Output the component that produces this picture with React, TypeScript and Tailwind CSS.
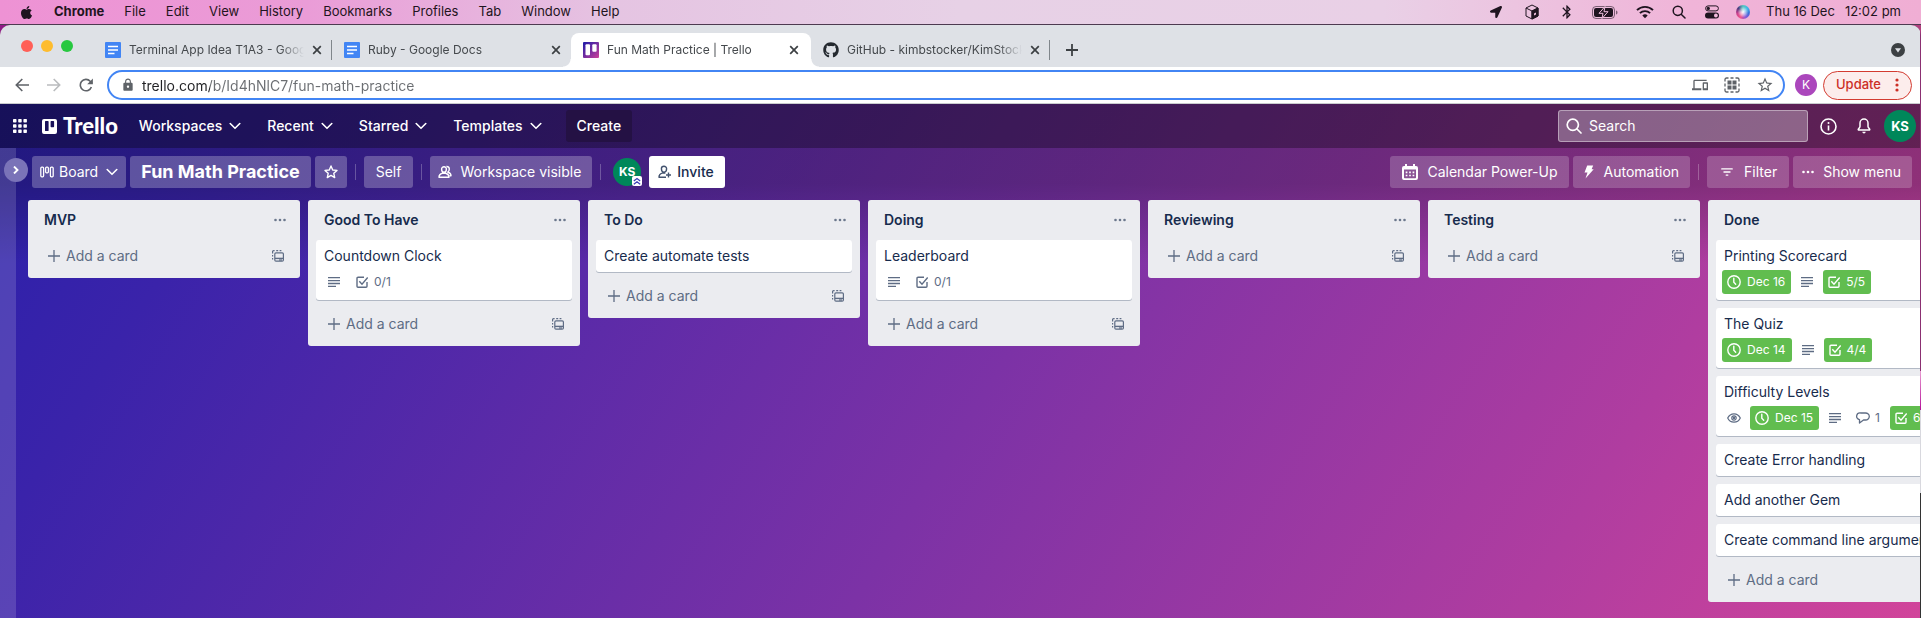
import type { ReactNode } from "react";
import { FaApple, FaGithub, FaLocationArrow } from "react-icons/fa";
import { MdBluetooth, MdLock, MdOutlineDevices, MdStarBorder } from "react-icons/md";

type Card = {
  title: string;
  watch?: boolean;
  due?: string;
  description?: boolean;
  comments?: number;
  checklist?: string;
  complete?: boolean;
};

type List = { name: string; cards: Card[] };

const lists: List[] = [
  { name: "MVP", cards: [] },
  { name: "Good To Have", cards: [{ title: "Countdown Clock", description: true, checklist: "0/1" }] },
  { name: "To Do", cards: [{ title: "Create automate tests" }] },
  { name: "Doing", cards: [{ title: "Leaderboard", description: true, checklist: "0/1" }] },
  { name: "Reviewing", cards: [] },
  { name: "Testing", cards: [] },
  {
    name: "Done",
    cards: [
      { title: "Printing Scorecard", due: "Dec 16", description: true, checklist: "5/5", complete: true },
      { title: "The Quiz", due: "Dec 14", description: true, checklist: "4/4", complete: true },
      {
        title: "Difficulty Levels",
        watch: true,
        due: "Dec 15",
        description: true,
        comments: 1,
        checklist: "6/6",
        complete: true,
      },
      { title: "Create Error handling" },
      { title: "Add another Gem" },
      { title: "Create command line arguments" },
    ],
  },
];

const menus = ["File", "Edit", "View", "History", "Bookmarks", "Profiles", "Tab", "Window", "Help"];

/* ---------- macOS menu bar ---------- */

function MenuBar() {
  return (
    <div className="flex h-[25px] items-center justify-between border-b border-[#4d3a50] bg-[linear-gradient(90deg,#ee92d4_0%,#ea9cd7_16%,#e5c4e2_32%,#e7d1e6_50%,#e9d0e6_72%,#f0b4d8_88%,#f0aed4_100%)] pr-5 pl-[19px] text-[13px] text-[#1f1420]">
      <nav aria-label="Menu bar" className="flex items-center gap-5">
        <FaApple className="size-[15px]" />
        <button className="font-bold">Chrome</button>
        {menus.map((m) => (
          <button key={m}>{m}</button>
        ))}
      </nav>
      <div className="flex items-center">
        <FaLocationArrow className="mr-[22px] size-3" />
        <svg viewBox="0 0 16 16" className="mr-[19px] size-4" fill="none" stroke="currentColor" strokeLinejoin="round">
          <path d="M8 1l6 3v8l-6 3-6-3V4z M2 4l6 3 6-3 M8 7v8" />
          <path d="M8 7l6-3v8l-6 3z" fill="currentColor" />
          <path d="M10 9.500l2-1v2l-2 1z" fill="#f0c0de" stroke="none" />
        </svg>
        <MdBluetooth className="mr-[17px] size-4" />
        <svg viewBox="0 0 26 13" className="mr-[18px] h-[13px] w-[26px]">
          <rect x="0.500" y="0.500" width="22" height="12" rx="3.500" fill="none" stroke="currentColor" opacity="0.55" />
          <rect x="2" y="2" width="19" height="9" rx="2" fill="currentColor" />
          <path d="M24 4.500v4c1-.4 1.500-1 1.500-2s-.5-1.600-1.500-2z" fill="currentColor" opacity="0.55" />
          <path d="M13 0.500L7 7.300h4L10 12.500l6-6.800h-4z" fill="currentColor" stroke="#f0c0de" />
        </svg>
        <svg viewBox="0 0 18 14" className="mr-[18px] h-[14px] w-[18px]" fill="none" stroke="currentColor" strokeWidth="1.900">
          <path d="M1 5.200a11.300 11.300 0 0 1 16 0 M3.900 8.200a7.200 7.200 0 0 1 10.200 0" />
          <path d="M6.300 10.500a3.800 3.800 0 0 1 5.400 0L9 13.200z" fill="currentColor" stroke="none" />
        </svg>
        <svg viewBox="0 0 14 14" className="mr-[19px] size-[14px]" fill="none" stroke="currentColor" strokeWidth="1.500">
          <circle cx="5.800" cy="5.800" r="4.600" />
          <path d="M9.200 9.200l3.800 3.800" strokeLinecap="round" />
        </svg>
        <svg viewBox="0 0 14 14" className="mr-[17px] size-[14px]">
          <rect x="0.600" y="0.900" width="12.800" height="5" rx="2.500" fill="none" stroke="currentColor" />
          <circle cx="3.300" cy="3.400" r="1.600" fill="currentColor" />
          <rect x="0" y="7.500" width="14" height="6" rx="3" fill="currentColor" />
          <circle cx="10.900" cy="10.500" r="1.900" fill="#f0b8da" />
        </svg>
        <span className="mr-4 size-[14px] rounded-full bg-[radial-gradient(circle,#ffffff_0%,#ffffff80_30%,transparent_55%),conic-gradient(#58c7c0,#3fb8e6,#3b6fd8,#8a5ad8,#f0568c,#c8408e,#4a3a80,#58c7c0)]" />
        <time className="flex gap-[10px]">
          <span>Thu 16 Dec</span>
          <span>12:02 pm</span>
        </time>
      </div>
    </div>
  );
}

/* ---------- Browser chrome ---------- */

function DocsIcon() {
  return (
    <svg viewBox="0 0 16 16" className="size-4 shrink-0">
      <rect width="16" height="16" rx="1" fill="#4285f4" />
      <path d="M3 4.500h10M3 8h10M3 11.500h6.500" stroke="#fff" strokeWidth="1.700" />
    </svg>
  );
}

function TrelloFavicon() {
  return (
    <svg viewBox="0 0 16 16" className="size-4 shrink-0">
      <defs>
        <linearGradient id="fav" x1="0" y1="0" x2="1" y2="1">
          <stop offset="0" stopColor="#1c1aa8" />
          <stop offset="1" stopColor="#cd4299" />
        </linearGradient>
      </defs>
      <rect width="16" height="16" rx="1" fill="url(#fav)" />
      <rect x="2.500" y="2.300" width="4.500" height="11" rx="1" fill="#fff" />
      <rect x="9.300" y="2.300" width="4.300" height="7.500" rx="1" fill="#fff" />
    </svg>
  );
}

function Tab({ icon, title, active, divider }: { icon: ReactNode; title: string; active?: boolean; divider?: boolean }) {
  return (
    <div
      className={
        active
          ? "relative flex w-60 items-center rounded-t-lg bg-white pr-4 pl-3"
          : "flex w-[239px] items-center pl-3"
      }
    >
      {icon}
      <span className="ml-2 flex-1 overflow-hidden text-xs whitespace-nowrap text-[#45494d] [mask-image:linear-gradient(90deg,#000_calc(100%-24px),transparent)]">
        {title}
      </span>
      <button aria-label={"Close " + title} className={active ? "text-[#3c4043]" : "ml-2 text-[#3c4043]"}>
        <svg viewBox="0 0 10 10" className={active ? "-mr-1 size-[10px]" : "size-[10px]"} stroke="currentColor" strokeWidth="1.700">
          <path d="M1.200 1.200l7.600 7.600M8.800 1.200l-7.600 7.600" />
        </svg>
      </button>
      {!active && <span className={divider ? "ml-[9px] h-5 w-px bg-[#80868b]" : "ml-[9px] h-5 w-px"} />}
      {active && (
        <>
          <span className="absolute bottom-0 -left-2 size-2 bg-[radial-gradient(circle_at_0_0,transparent_7px,#ffffff_8px)]" />
          <span className="absolute -right-2 bottom-0 size-2 bg-[radial-gradient(circle_at_100%_0,transparent_7px,#ffffff_8px)]" />
        </>
      )}
    </div>
  );
}

function TabStrip() {
  return (
    <div className="flex h-[42px] items-stretch bg-[#dee1e6] pr-[15px] pl-[21px]">
      <div className="mr-5 flex items-center gap-2">
        <button aria-label="Close window" className="size-3 rounded-full bg-[#ff5f57]" />
        <button aria-label="Minimise window" className="size-3 rounded-full bg-[#febc2e]" />
        <button aria-label="Zoom window" className="size-3 rounded-full bg-[#28c840]" />
      </div>
      <div className="flex pt-2">
        <Tab icon={<DocsIcon />} title="Terminal App Idea T1A3 - Google Docs" divider />
        <Tab icon={<DocsIcon />} title="Ruby - Google Docs" />
        <Tab icon={<TrelloFavicon />} title="Fun Math Practice | Trello" active />
        <Tab
          icon={<FaGithub className="size-4 shrink-0 text-[#24292f]" />}
          title="GitHub - kimbstocker/KimStocker_T1A3"
          divider
        />
        <button aria-label="New tab" className="ml-4 text-[#3c4043]">
          <svg viewBox="0 0 12 12" className="size-3" stroke="currentColor" strokeWidth="1.800">
            <path d="M6 0v12M0 6h12" />
          </svg>
        </button>
      </div>
      <button aria-label="Search tabs" className="ml-auto pt-2">
        <svg viewBox="0 0 14 14" className="size-[14px]">
          <circle cx="7" cy="7" r="7" fill="#3c4043" />
          <path d="M4 5.200h6L7 9.600z" fill="#dee1e6" />
        </svg>
      </button>
    </div>
  );
}

function Toolbar() {
  return (
    <div className="flex h-[37px] items-center border-b border-[#c9cbce] bg-white pr-2 pl-[15px] text-[#5f6368]">
      <button aria-label="Back" className="mr-[18px]">
        <svg viewBox="0 0 14 14" className="size-[14px]" fill="none" stroke="currentColor" strokeWidth="1.600">
          <path d="M14 7H1.500M7.300 1L1.300 7l6 6" />
        </svg>
      </button>
      <button aria-label="Forward" className="mr-[18px] text-[#babcbe]">
        <svg viewBox="0 0 14 14" className="size-[14px]" fill="none" stroke="currentColor" strokeWidth="1.600">
          <path d="M0 7h12.500M6.700 1l6 6-6 6" />
        </svg>
      </button>
      <button aria-label="Reload" className="mr-[14px]">
        <svg viewBox="0 0 14 14" className="size-[14px]" fill="none" stroke="currentColor" strokeWidth="1.600">
          <path d="M12.400 9A5.700 5.700 0 1 1 11.200 3.200L13 5" />
          <path d="M13.900 0.500v5.700H8.200z" fill="currentColor" stroke="none" />
        </svg>
      </button>
      <div className="flex h-[30px] flex-1 items-center rounded-full border-2 border-[#4285f4] pr-[9px] pl-3">
        <MdLock className="size-[14px]" />
        <input
          aria-label="Address"
          defaultValue="trello.com/b/Id4hNlC7/fun-math-practice"
          className="ml-[7px] h-6 flex-1 bg-[linear-gradient(90deg,#202124_68px,#6b6e72_68px)] bg-clip-text text-sm text-transparent outline-none"
        />
        <MdOutlineDevices className="mr-4 size-4" />
        <svg viewBox="0 0 16 16" className="mr-4 size-4" fill="currentColor">
          <rect x="3.500" y="3.500" width="4" height="4" />
          <rect x="8.500" y="3.500" width="4" height="4" />
          <rect x="3.500" y="8.500" width="4" height="4" />
          <rect x="8.500" y="8.500" width="4" height="4" />
          <path
            d="M1 4.500V2.500a1.500 1.500 0 0 1 1.500-1.500h2M6.500 1h3M11.500 1h2a1.500 1.500 0 0 1 1.500 1.500v2M15 6.500v3M15 11.500v2a1.500 1.500 0 0 1-1.500 1.500h-2M9.500 15h-3M4.500 15h-2a1.500 1.500 0 0 1-1.500-1.500v-2M1 9.500v-3"
            fill="none"
            stroke="currentColor"
            strokeWidth="1.300"
          />
        </svg>
        <MdStarBorder className="size-[18px]" />
      </div>
      <button aria-label="Profile" className="ml-[10px] size-[22px] rounded-full bg-[#ab47bc] text-xs text-white">
        K
      </button>
      <button className="ml-[6px] flex h-[29px] items-center gap-[14px] rounded-full border border-[#d33b30] bg-[#fcedec] px-3 text-[13px] font-medium text-[#cc2f26]">
        Update
        <svg viewBox="0 0 4 14" className="h-[14px] w-1" fill="currentColor">
          <circle cx="2" cy="2" r="1.600" />
          <circle cx="2" cy="7" r="1.600" />
          <circle cx="2" cy="12" r="1.600" />
        </svg>
      </button>
    </div>
  );
}

/* ---------- Board icons ---------- */

function Chevron() {
  return (
    <svg viewBox="0 0 12 8" className="h-2 w-3" fill="none" stroke="currentColor" strokeWidth="1.600" strokeLinecap="round" strokeLinejoin="round">
      <path d="M1.200 1.500L6 6.300l4.800-4.800" />
    </svg>
  );
}

function Dots({ className }: { className: string }) {
  return (
    <svg viewBox="0 0 12 4" className={className} fill="currentColor">
      <circle cx="1.500" cy="2" r="1.300" />
      <circle cx="6" cy="2" r="1.300" />
      <circle cx="10.500" cy="2" r="1.300" />
    </svg>
  );
}

function DescriptionIcon() {
  return (
    <svg viewBox="0 0 12 10" className="h-[10px] w-3" stroke="currentColor" strokeWidth="1.300">
      <path d="M0 0.700h12M0 3.600h12M0 6.500h12M0 9.400h8" />
    </svg>
  );
}

function CheckIcon() {
  return (
    <svg viewBox="0 0 12 12" className="size-3" fill="none" stroke="currentColor" strokeWidth="1.400">
      <path d="M8 1.200H2a1 1 0 0 0-1 1v8a1 1 0 0 0 1 1h8a1 1 0 0 0 1-1V6" />
      <path d="M3.300 5.200l2.700 3 5.700-6.700" />
    </svg>
  );
}

function ClockIcon() {
  return (
    <svg viewBox="0 0 14 14" className="size-[14px]" fill="none" stroke="currentColor" strokeWidth="1.400" strokeLinecap="round">
      <circle cx="7" cy="7" r="6.200" />
      <path d="M6.800 3.300V7.200l1.900 2" />
    </svg>
  );
}

function EyeIcon() {
  return (
    <svg viewBox="0 0 14 10" className="-mx-px h-[10px] w-[14px]" fill="none" stroke="currentColor" strokeWidth="1.200">
      <path d="M0.700 5C2 2.300 4.300 0.800 7 0.800S12 2.300 13.300 5C12 7.700 9.700 9.200 7 9.200S2 7.700 0.700 5z" />
      <circle cx="7" cy="5" r="2.200" />
      <circle cx="7" cy="5" r="0.600" fill="currentColor" />
    </svg>
  );
}

function CommentIcon() {
  return (
    <svg viewBox="0 0 14 12" className="-mx-px h-3 w-[14px]" fill="none" stroke="currentColor" strokeWidth="1.300" strokeLinejoin="round">
      <path d="M5 1h4.500a3.800 3.500 0 0 1 0 7H7.500L3.500 11V7.700A3.600 3.400 0 0 1 5 1z" />
    </svg>
  );
}

function TemplateIcon() {
  return (
    <svg viewBox="0 0 12 12" className="size-3" fill="none" stroke="currentColor" strokeWidth="1.200">
      <rect x="2.800" y="2.900" width="8.600" height="8.300" rx="1.200" />
      <path d="M3 8.400h8.500" strokeWidth="1.400" />
      <path d="M7 10h3" />
      <path d="M0.600 9.500V8M0.600 6.500V5M0.600 3.500V1.600q0-1 1-1h1M4.200 0.600h2M7.600 0.600h1.800" />
    </svg>
  );
}

/* ---------- Trello header ---------- */

function Header() {
  return (
    <header className="flex h-11 items-center bg-black/30 pr-1 pl-[13px] text-sm font-medium text-white">
      <button aria-label="Switch app">
        <svg viewBox="0 0 14 14" className="size-[14px]" fill="currentColor">
          {[0, 5.200, 10.400].map((y) =>
            [0, 5.200, 10.400].map((x) => <rect key={x + "-" + y} x={x} y={y} width="3.500" height="3.500" rx="0.700" />),
          )}
        </svg>
      </button>
      <a href="#home" className="ml-[15px] flex items-center gap-[6px] font-['Lato'] text-[22px] leading-6 font-black">
        <svg viewBox="0 0 15 15" className="size-[15px]">
          <path
            fill="currentColor"
            fillRule="evenodd"
            d="M2 0h11a2 2 0 0 1 2 2v11a2 2 0 0 1-2 2H2a2 2 0 0 1-2-2V2a2 2 0 0 1 2-2zM3 2.600v8.800q0 .7.700.7h2.200q.7 0 .7-.7V2.600q0-.7-.7-.7H3.700q-.7 0-.7.700zM8.600 2.600v4.900q0 .7.700.7h2.100q.7 0 .7-.7V2.600q0-.7-.7-.7H9.300q-.7 0-.7.700z"
          />
        </svg>
        Trello
      </a>
      <nav aria-label="Main" className="ml-[21px] flex items-center gap-[26px]">
        {["Workspaces", "Recent", "Starred", "Templates"].map((n) => (
          <button key={n} className="flex items-center gap-[7px] font-medium">
            {n}
            <Chevron />
          </button>
        ))}
      </nav>
      <button className="ml-6 h-8 rounded-[3px] bg-[#241144] px-[11px] font-medium">Create</button>
      <label className="ml-auto flex h-8 w-[250px] items-center gap-[7px] rounded-[3px] border border-white/40 bg-white/30 pl-[7px]">
        <svg viewBox="0 0 16 16" className="size-4 shrink-0" fill="none" stroke="currentColor" strokeWidth="1.700" strokeLinecap="round">
          <circle cx="6.800" cy="6.800" r="5.600" />
          <path d="M11 11l4 4" />
        </svg>
        <input aria-label="Search" placeholder="Search" className="w-full bg-transparent font-normal outline-none placeholder:text-white" />
      </label>
      <button aria-label="Information" className="ml-3">
        <svg viewBox="0 0 17 17" className="size-[17px]" fill="none" stroke="currentColor" strokeWidth="1.600">
          <circle cx="8.500" cy="8.500" r="7.500" />
          <path d="M8.500 7.400v5" />
          <circle cx="8.500" cy="5" r="1" fill="currentColor" stroke="none" />
        </svg>
      </button>
      <button aria-label="Notifications" className="ml-5">
        <svg viewBox="0 0 14 16" className="h-4 w-[14px]" fill="none" stroke="currentColor" strokeWidth="1.500" strokeLinejoin="round">
          <path d="M7 1a4 4 0 0 1 4 4v3.200q0 1 .8 1.800l.9 1.200q.3.800-.6.800H1.900q-.9 0-.6-.8l.9-1.200Q3 9.200 3 8.200V5a4 4 0 0 1 4-4z" />
          <path d="M5.300 13.700h3.400a1.700 1.700 0 0 1-3.400 0z" fill="currentColor" stroke="none" />
        </svg>
      </button>
      <button aria-label="Account" className="ml-[13px] size-8 rounded-full bg-[#00875a] text-[13px] font-bold">
        KS
      </button>
    </header>
  );
}

function Divider({ className }: { className: string }) {
  return <span className={"h-4 w-px bg-white/25 " + className} />;
}

function BoardHeader() {
  return (
    <div className="flex items-center pt-2 pr-2 pb-3 pl-4 text-sm text-white">
      <button className="flex h-8 items-center gap-[5px] rounded-[3px] bg-white/25 pr-2 pl-2">
        <svg viewBox="0 0 14 12" className="h-3 w-[14px]" fill="none" stroke="currentColor" strokeWidth="1.300">
          <rect x="0.800" y="1.200" width="2.800" height="9.600" rx="1" />
          <rect x="5.600" y="1.200" width="2.800" height="5.600" rx="1" />
          <rect x="10.400" y="1.200" width="2.800" height="9.600" rx="1" />
        </svg>
        Board
        <span className="ml-[3px]">
          <Chevron />
        </span>
      </button>
      <h1 className="ml-1 h-8 rounded-[3px] bg-white/25 px-[11px] text-lg leading-8 font-bold">Fun Math Practice</h1>
      <button aria-label="Star board" className="ml-1 flex size-8 items-center justify-center rounded-[3px] bg-white/25">
        <svg viewBox="0 0 14 14" className="size-[14px]" fill="none" stroke="currentColor" strokeWidth="1.400" strokeLinejoin="round">
          <path d="M7 1l1.700 4 4.300.4-3.200 2.900.9 4.300L7 10.400l-3.700 2.200.9-4.300L1 5.400 5.300 5z" />
        </svg>
      </button>
      <Divider className="mx-2" />
      <button className="h-8 rounded-[3px] bg-white/25 px-3">Self</button>
      <Divider className="mx-2" />
      <button className="flex h-8 items-center gap-2 rounded-[3px] bg-white/25 pr-[11px] pl-2">
        <svg viewBox="0 0 14 14" className="size-[14px]" fill="none" stroke="currentColor" strokeWidth="1.400" strokeLinejoin="round">
          <path d="M6 1.700a2.400 2.400 0 0 1 2.400 2.400C8.400 6 7.500 7.300 6 7.300S3.600 6 3.600 4.100A2.400 2.400 0 0 1 6 1.700zM1 12.300c0-2.400 1.300-3.500 3.300-4h3.400c2 .5 3.300 1.600 3.300 4z" />
          <path d="M8.400 1.500c1.800-.2 2.900 1 2.900 2.600 0 1.300-.6 2.500-1.500 3.100 2 .5 3.200 1.700 3.200 3.500h-1.500" />
        </svg>
        Workspace visible
      </button>
      <Divider className="mx-2" />
      <div className="relative ml-1 size-7 rounded-full bg-[#00875a] text-center text-xs leading-7 font-bold">
        KS
        <span className="absolute -right-px bottom-0 flex size-[10px] items-center justify-center rounded-[2px] bg-white">
          <svg viewBox="0 0 8 8" className="size-2" fill="none" stroke="#3b3fb5" strokeWidth="1.300">
            <path d="M0.800 4L4 1.500 7.200 4M0.800 7.300L4 4.800l3.200 2.500" />
          </svg>
        </span>
      </div>
      <button className="ml-2 flex h-8 items-center gap-[5px] rounded-[3px] bg-white pr-[11px] pl-[9px] font-medium text-[#172b4d]">
        <svg viewBox="0 0 14 14" className="size-[14px]" fill="none" stroke="#42526e" strokeWidth="1.400" strokeLinejoin="round">
          <path d="M6 1.200a2.600 2.600 0 0 1 2.600 2.600C8.600 5.800 7.600 7.200 6 7.200S3.400 5.800 3.400 3.800A2.600 2.600 0 0 1 6 1.200zM8 12.300H1c0-2.400 1.200-3.700 3.200-4.200h3.200M10.500 7.500v5M8 10h5" />
        </svg>
        Invite
      </button>

      <div className="ml-auto flex items-center">
        <button className="flex h-8 items-center gap-[9px] rounded-[3px] bg-white/20 pr-[11px] pl-3">
          <svg viewBox="0 0 16 16" className="size-4">
            <path
              fill="currentColor"
              fillRule="evenodd"
              d="M3 0h2v2h6V0h2v2h1a2 2 0 0 1 2 2v10a2 2 0 0 1-2 2H2a2 2 0 0 1-2-2V4a2 2 0 0 1 2-2h1zM2 5.500v8q0 .8.800.8h10.400q.8 0 .8-.8v-8z"
            />
            <path d="M3.700 8.300h8.600M3.700 11.500h8.600" stroke="currentColor" strokeWidth="1.700" strokeDasharray="1.700 1.750" />
          </svg>
          Calendar Power-Up
        </button>
        <button className="ml-1 flex h-8 items-center gap-[10px] rounded-[3px] bg-white/20 pr-[11px] pl-[11px]">
          <svg viewBox="0 0 10 14" className="h-[14px] w-[10px]" fill="currentColor">
            <path d="M3.200 0.500h6L7.600 4.300H9.700L1.500 13.500l2-6H0.500z" />
          </svg>
          Automation
        </button>
        <Divider className="mx-2" />
        <button className="flex h-8 items-center gap-[11px] rounded-[3px] bg-white/20 pr-3 pl-[14px]">
          <svg viewBox="0 0 12 8" className="h-2 w-3" stroke="currentColor" strokeWidth="1.400" strokeLinecap="round">
            <path d="M0.800 0.900h10.400M3 4h6M5.200 7.100h1.600" />
          </svg>
          Filter
        </button>
        <button className="ml-1 flex h-8 items-center gap-[9px] rounded-[3px] bg-white/20 pr-[11px] pl-[9px]">
          <Dots className="h-1 w-3" />
          Show menu
        </button>
      </div>
    </div>
  );
}

/* ---------- Lists ---------- */

function Badge({ complete, children }: { complete?: boolean; children: ReactNode }) {
  return (
    <span
      className={
        complete
          ? "flex h-6 shrink-0 items-center gap-[6px] rounded-[3px] bg-[#61bd4f] pr-[6px] pl-[5px] text-xs text-white"
          : "flex h-6 shrink-0 items-center gap-[6px] px-[6px] text-xs text-[#5e6c84]"
      }
    >
      {children}
    </span>
  );
}

function CardItem({ card }: { card: Card }) {
  const hasBadges = card.due || card.description || card.checklist;
  return (
    <li className="rounded-[3px] bg-white px-2 py-[6px] text-[#172b4d] shadow-[0_1px_0_#091e4240]">
      <a href="#card" className="block text-sm leading-5 whitespace-nowrap">
        {card.title}
      </a>
      {hasBadges && (
        <div className="-mx-[2px] mt-1 flex gap-1">
          {card.watch && (
            <Badge>
              <EyeIcon />
            </Badge>
          )}
          {card.due && (
            <Badge complete={card.complete}>
              <ClockIcon />
              {card.due}
            </Badge>
          )}
          {card.description && (
            <Badge>
              <DescriptionIcon />
            </Badge>
          )}
          {card.comments && (
            <Badge>
              <CommentIcon />
              {card.comments}
            </Badge>
          )}
          {card.checklist && (
            <Badge complete={card.complete}>
              <CheckIcon />
              {card.checklist}
            </Badge>
          )}
        </div>
      )}
    </li>
  );
}

function ListColumn({ list }: { list: List }) {
  return (
    <section className="w-[272px] shrink-0 rounded-[3px] bg-[#ebecf0]">
      <div className="flex h-10 items-center justify-between pr-[14px] pl-4">
        <h2 className="text-sm font-semibold text-[#172b4d]">{list.name}</h2>
        <button aria-label={"List actions for " + list.name} className="text-[#6b778c]">
          <Dots className="h-1 w-3" />
        </button>
      </div>
      {list.cards.length > 0 && (
        <ul className="mx-2 mb-2 flex flex-col gap-2">
          {list.cards.map((c) => (
            <CardItem key={c.title} card={c} />
          ))}
        </ul>
      )}
      <div className="flex h-[38px] items-center justify-between pr-4 pb-[6px] pl-5 text-sm text-[#5e6c84]">
        <button className="flex items-center gap-[6px]">
          <svg viewBox="0 0 12 12" className="size-3" stroke="currentColor" strokeWidth="1.300">
            <path d="M6 0v12M0 6h12" />
          </svg>
          Add a card
        </button>
        <button aria-label="Create from template">
          <TemplateIcon />
        </button>
      </div>
    </section>
  );
}

export default function App() {
  return (
    <div className="flex min-h-screen flex-col bg-[linear-gradient(90deg,#8f1a86,#b0407e)] font-['Inter',sans-serif]">
      <MenuBar />
      <div className="flex flex-1 flex-col overflow-hidden rounded-t-[10px] bg-[linear-gradient(180deg,#8b2f72_346px,#e89ad0_346px,#b5119a_385px,#d8d8de_385px,#d8d8de_468px,#333333_468px)] pr-px">
        <TabStrip />
        <Toolbar />
        <div className="flex flex-1 flex-col bg-[linear-gradient(180deg,#0000003d_0px,#0000003d_80px,#00000000_160px),linear-gradient(122deg,#2b20aa_0%,#3a23aa_12%,#7c32a6_52%,#b03da0_82%,#d1449a_100%)]">
          <Header />
          <div className="flex flex-1">
            <aside className="relative w-4 shrink-0 bg-white/15">
              <button
                aria-label="Expand sidebar"
                className="absolute top-[10px] left-1 flex size-6 items-center justify-center rounded-full bg-[#7a73b8] text-white"
              >
                <svg viewBox="0 0 6 8" className="h-2 w-[6px]" fill="none" stroke="currentColor" strokeWidth="1.900">
                  <path d="M1 0.500L4.500 4 1 7.500" />
                </svg>
              </button>
            </aside>
            <main className="min-w-0 flex-1">
              <BoardHeader />
              <div className="flex items-start gap-2 overflow-hidden pb-4 pl-3">
                {lists.map((l) => (
                  <ListColumn key={l.name} list={l} />
                ))}
              </div>
            </main>
          </div>
        </div>
      </div>
    </div>
  );
}
